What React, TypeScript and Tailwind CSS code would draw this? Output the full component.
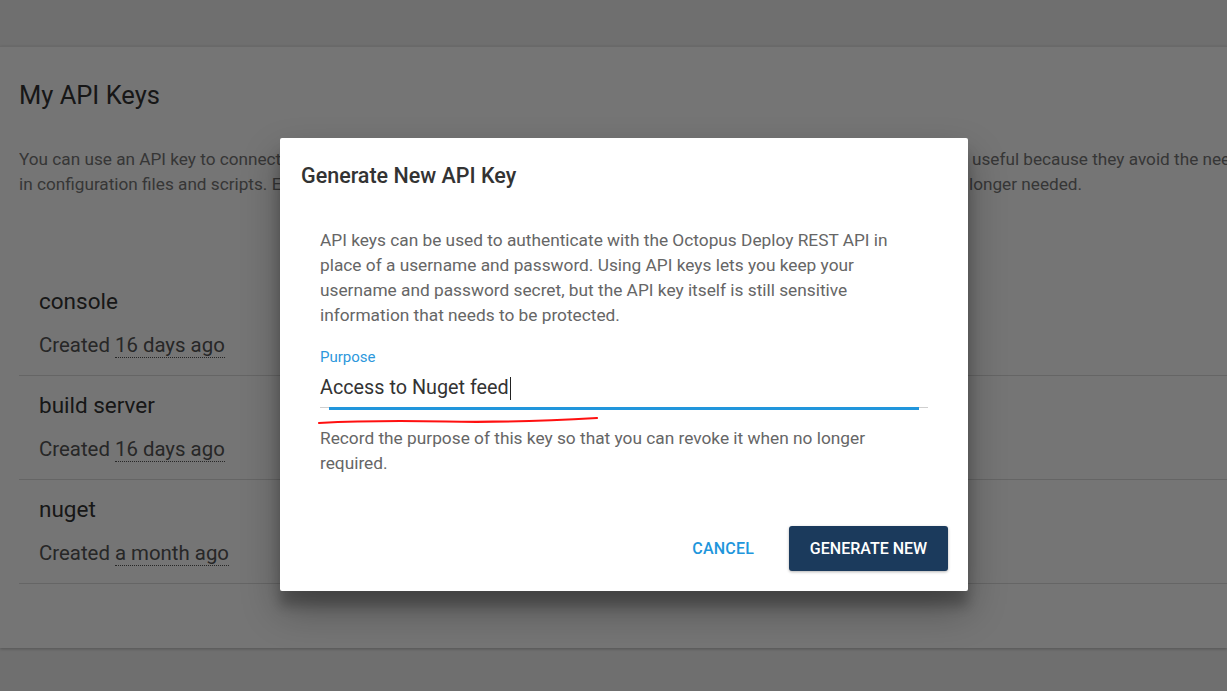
import React from "react";

const items = [
  { name: "console", when: "16 days ago" },
  { name: "build server", when: "16 days ago" },
  { name: "nuget", when: "a month ago" },
];

export default function App() {
  return (
    <div
      className="relative w-[1227px] h-[691px] overflow-hidden bg-[#f2f2f2]"
      style={{ fontFamily: "Roboto, 'Noto Sans', sans-serif" }}
    >
      {/* page */}
      <div className="h-[46px]" />
      <div className="h-[602px] bg-white shadow-[0_1px_3px_rgba(0,0,0,0.25)] border-t border-[#e4e4e4] pl-[19px]">
        <h1 className="pt-[32px] text-[25.5px] leading-[32px] text-[#333]">My API Keys</h1>
        <div className="mt-[36px] text-[17.2px] leading-[25px] text-[#777] whitespace-nowrap">
          <div className="flex">
            <span className="inline-block w-[953px] shrink-0 overflow-hidden">
              You can use an API key to connect to the Octopus Deploy REST API and the Octopus Command Line (octo.exe). API keys are
            </span>
            <span>useful because they avoid the need to store your username and password</span>
          </div>
          <div className="flex">
            <span className="inline-block w-[950px] shrink-0 overflow-hidden">
              in configuration files and scripts. Each API key can be revoked individually, for example when it is compromised or no
            </span>
            <span>longer needed.</span>
          </div>
        </div>
        <div className="mt-[74px]">
          {items.map((it, i) => (
            <div key={i} className={`h-[104px] pl-[20px] ${i > 0 ? "border-t border-[#ddd] pt-[15px]" : "pt-[16px]"}`}>
              <div className="text-[22.5px] leading-[28px] text-[#333]">{it.name}</div>
              <div className="mt-[18px] text-[20.4px] leading-[24px] text-[#555]">
                Created{" "}
                <span className="border-b border-dotted border-[#555]">{it.when}</span>
              </div>
            </div>
          ))}
          <div className="border-t border-[#ddd]" />
        </div>
      </div>

      {/* overlay */}
      <div className="absolute inset-0 bg-[rgba(0,0,0,0.54)]" />

      {/* dialog */}
      <div className="absolute left-[280px] top-[138px] w-[688px] h-[453px] bg-white rounded-[2px] shadow-[0_19px_38px_rgba(0,0,0,0.30),0_15px_12px_rgba(0,0,0,0.22)] flex flex-col">
        <div className="pt-[24px] px-[21px] text-[21.5px] leading-[28px] font-medium text-[#333]">
          Generate New API Key
        </div>
        <div className="px-[40px] pt-[38px]">
          <p className="text-[17.3px] leading-[25px] text-[#666]">
            API keys can be used to authenticate with the Octopus Deploy REST API in place of a username and password. Using API keys lets you keep your username and password secret, but the API key itself is still sensitive information that needs to be protected.
          </p>
          <div className="relative mt-[20px]">
            <div className="text-[15px] leading-[18px] text-[#2d98dc]">Purpose</div>
            <div className="mt-[7px] flex items-center h-[30px] text-[19.8px] text-[#333]">
              <span>Access to Nuget feed</span>
              <span className="inline-block w-[1px] h-[23px] bg-[#222] ml-[1px]" />
            </div>
            <div className="relative mt-[4px] h-[3px]">
              <div className="absolute left-0 right-0 top-0 h-[1px] bg-[#cfcfcf]" />
              <div className="absolute left-[9px] right-[9px] top-0 h-[3px] bg-[#2196dc]" />
            </div>
            <svg className="absolute left-[-4px] top-[65px]" width="290" height="14" viewBox="0 0 290 14">
              <path
                d="M3 10 C 40 8, 80 7.5, 130 8.5 C 180 9.5, 230 8, 281 5"
                stroke="#ff1010"
                strokeWidth="2.2"
                fill="none"
                strokeLinecap="round"
              />
            </svg>
            <p className="mt-[16px] text-[17.3px] leading-[25px] text-[#666]">
              Record the purpose of this key so that you can revoke it when no longer required.
            </p>
          </div>
        </div>
        <div className="mt-auto flex justify-end items-center gap-[35px] pr-[20px] pb-[20px]">
          <button className="text-[16px] font-medium text-[#2196dc] tracking-[0.2px]">CANCEL</button>
          <button className="w-[159px] h-[45px] rounded-[3px] bg-[#1b3a5c] text-white text-[16px] font-medium shadow-[0_1px_3px_rgba(0,0,0,0.3)]">
            GENERATE NEW
          </button>
        </div>
      </div>
    </div>
  );
}
